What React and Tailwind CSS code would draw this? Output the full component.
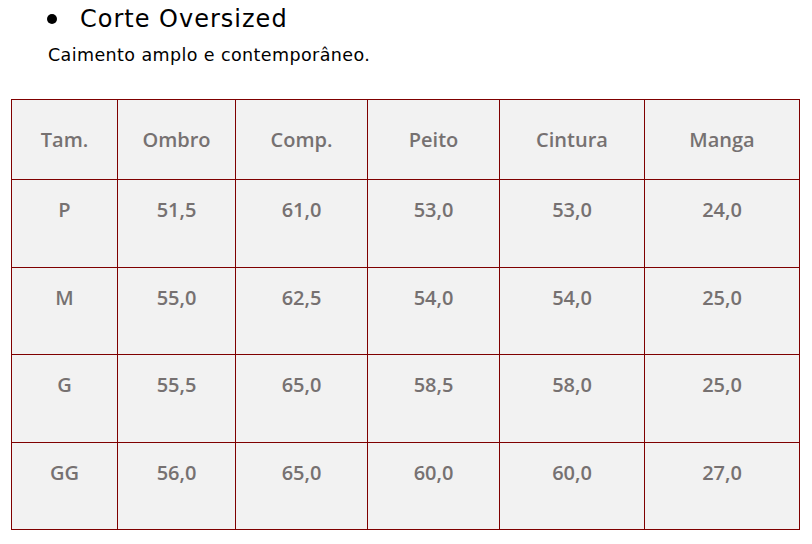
import React from 'react';

const headers = ['Tam.', 'Ombro', 'Comp.', 'Peito', 'Cintura', 'Manga'];
const widths = ['w-[106px]', 'w-[118px]', 'w-[132px]', 'w-[132px]', 'w-[145px]', 'w-[155px]'];
const rowHeights = ['h-[88px]', 'h-[87px]', 'h-[88px]', 'h-[87px]'];

const rows = [
  ['P', '51,5', '61,0', '53,0', '53,0', '24,0'],
  ['M', '55,0', '62,5', '54,0', '54,0', '25,0'],
  ['G', '55,5', '65,0', '58,5', '58,0', '25,0'],
  ['GG', '56,0', '65,0', '60,0', '60,0', '27,0'],
];

export default function App() {
  return (
    <div className="w-[812px] h-[544px] bg-white font-['Open_Sans',sans-serif]">
      {/* Title */}
      <div className="pl-[44px] pt-[2px] h-[62px] font-['DejaVu_Sans',sans-serif]">
        <div className="flex items-center h-[34px]">
          <span className="w-[10px] h-[10px] rounded-full bg-black ml-[3px]" />
          <span className="ml-[23px] text-[24px] text-black leading-none tracking-[1px]">Corte Oversized</span>
        </div>
        <p className="ml-[4px] mt-[11px] text-[17.5px] text-black leading-none tracking-[0.4px]">Caimento amplo e contemporâneo.</p>
      </div>

      {/* Size table */}
      <table className="ml-[11px] mt-[37px] border-collapse table-fixed w-[788px] bg-[#f2f2f2]">
        <thead>
          <tr className="h-[80px]">
            {headers.map((h, i) => (
              <th
                key={h}
                className={`${widths[i]} border border-[#7f0000] text-[20px] font-semibold text-[#767171] align-middle`}
              >
                {h}
              </th>
            ))}
          </tr>
        </thead>
        <tbody>
          {rows.map((r, ri) => (
            <tr key={ri} className={rowHeights[ri]}>
              {r.map((c, ci) => (
                <td
                  key={ci}
                  className="border border-[#7f0000] text-[20px] font-semibold text-[#767171] text-center align-top pt-[15px]"
                >
                  {c}
                </td>
              ))}
            </tr>
          ))}
        </tbody>
      </table>
    </div>
  );
}
